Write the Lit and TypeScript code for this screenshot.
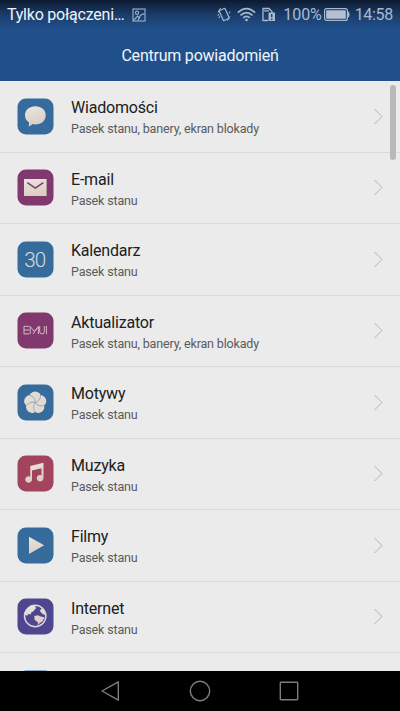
import { LitElement, html, css, svg } from "lit";
import { customElement } from "lit/decorators.js";

const petals = [0, 72, 144, 216, 288];

const glyphs: Record<string, unknown> = {
  messages: svg`<path fill="url(#cream)" d="M18.3 8.2C24.3 8.2 28.7 11.900 28.700 17.200C28.700 22.700 24.300 26.400 18.500 26.400C17.500 26.400 16.600 26.300 15.700 26.100C14.500 27.300 13 28.100 11.400 28.500C12 27.400 12.200 26 12 24.400C9.500 22.800 8 20.300 8 17.200C8 11.900 12.400 8.200 18.300 8.200Z"/>`,
  mail: svg`<rect x="7" y="10" width="22.600" height="17" fill="url(#cream)"/><path d="M10.300 13.700L18.300 19.200L26.300 13.700" fill="none" stroke="#80386f" stroke-width="1.500"/>`,
  calendar: svg`<text x="18.200" y="25.600" text-anchor="middle" font-size="20.600" font-weight="300" textLength="21.800" fill="#dbdcda">30</text>`,
  emui: svg`<g fill="none" stroke="#dcc0ca" stroke-width=".95"><path d="M12.300 14.300H7V21.900H12.300M7 18H12.300M13.200 22V14.500L17.300 19.600L21.400 14.500V22M16 22L20 16M22.700 14V19.500Q22.700 22 25 22Q27.300 22 27.300 19.500V14M29.400 14V22.200"/></g>`,
  themes: svg`${petals.map((a) => svg`<circle transform="rotate(${a} 18.200 18.700)" cx="18.200" cy="13.400" r="6" fill="#e3dbd3"/>`)}
    ${petals.map((a) => svg`<path transform="rotate(${a + 36} 18.200 18.700)" d="M18.200 18.700C20.200 16.500 20.400 12.800 18.200 9.300" fill="none" stroke="#7f99ad" stroke-width=".7"/>`)}`,
  music: svg`<path fill="url(#cream)" d="M13.300 10.900L26.500 7.800V23.100A3.400 3.200 0 1 1 24.500 20.300V13.200L15 15.500V24.700A3.400 3.200 0 1 1 13.300 21.800Z"/>`,
  video: svg`<path fill="url(#cream)" d="M12 9.800L27.200 18.200L12 27Z"/>`,
  globe: svg`<circle cx="18.200" cy="18" r="10.700" fill="none" stroke="#dcd4da" stroke-width="1.500"/><path fill="url(#cream)" d="M10 10.900L14.500 7.800L19.500 7.500L17.700 8.900L19.500 9.700L17.500 11.700L16.800 13.100L14.200 14.600L13.900 16.600L12.200 15.900L10.500 16.700L10.400 17.900L8.200 16.700L7.600 14.900ZM17.300 18L21 17.300L23 18.300L27.600 19.400L25.300 23.400L22.800 25.100L20.800 27.500L21 24.600L17.600 21.700ZM22.800 12.600L25.200 10.300L27.800 13.500L28.400 17L26 16.300L24 14.500Z"/>`,
  none: svg``,
};

const rows = [
  ["Wiadomości", "Pasek stanu, banery, ekran blokady", "blue", "messages"],
  ["E-mail", "Pasek stanu", "purple", "mail"],
  ["Kalendarz", "Pasek stanu", "blue", "calendar"],
  ["Aktualizator", "Pasek stanu, banery, ekran blokady", "purple", "emui"],
  ["Motywy", "Pasek stanu", "blue", "themes"],
  ["Muzyka", "Pasek stanu", "red", "music"],
  ["Filmy", "Pasek stanu", "blue", "video"],
  ["Internet", "Pasek stanu", "indigo", "globe"],
  ["", "", "blue", "none"],
];

@customElement("app-root")
export class AppRoot extends LitElement {
  static styles = css`
    :host {
      display: flex;
      flex-direction: column;
      width: 400px;
      height: 711px;
      overflow: hidden;
      background: #ebebeb;
      font-family: Roboto, sans-serif;
    }
    header {
      flex: none;
      height: 81px;
      color: #f2f5f9;
      background: linear-gradient(#0c1a30 0, #10233f 4px, #1b3f6e 16px, #20508c 30px);
    }
    .status {
      display: flex;
      align-items: center;
      height: 29px;
      padding: 0 7px;
      font-size: 16px;
      color: #a9b9d0;
    }
    .carrier { width: 118px; color: #f0f3f7; white-space: nowrap; letter-spacing: -.22px; }
    .picture { margin-left: 7px; }
    .system { display: flex; align-items: center; margin-left: auto; }
    .wifi { margin-left: 6px; }
    .sim { margin-left: 6px; }
    .percent { margin-left: 7px; letter-spacing: -.1px; }
    .battery { margin-left: 2px; }
    .time { margin-left: 5px; letter-spacing: -.3px; }
    h1 {
      margin: 0;
      font-size: 16px;
      font-weight: 400;
      line-height: 54px;
      letter-spacing: -.22px;
      text-align: center;
    }
    main { position: relative; flex: 1; min-height: 0; overflow: hidden; }
    .row {
      display: flex;
      align-items: center;
      box-sizing: border-box;
      height: 71.500px;
      padding: 0 16px 0 17px;
      border-bottom: 1px solid #dadada;
    }
    .tile { flex: none; width: 37px; height: 37px; }
    .blue { fill: #366c9c; }
    .purple { fill: #80386f; }
    .red { fill: #a2445e; }
    .indigo { fill: #4e468e; }
    .text { flex: 1; margin-left: 17px; padding-top: 4px; }
    .title { font-size: 16px; line-height: 21px; letter-spacing: -.2px; color: #202020; }
    .detail { font-size: 12.500px; line-height: 21px; letter-spacing: -.16px; color: #5a5a5a; }
    .thumb {
      position: absolute;
      top: 4px;
      right: 4px;
      width: 6px;
      height: 75px;
      border-radius: 3px;
      background: #b9b9b9;
    }
    nav {
      display: flex;
      flex: none;
      align-items: center;
      justify-content: center;
      gap: 65px;
      height: 40px;
      background: #000;
    }
    svg { display: block; }
  `;

  render() {
    return html`
      <header>
        <div class="status">
          <span class="carrier">Tylko połączeni…</span>
          <svg class="picture" width="14" height="14" fill="none" stroke="#97a9c3" stroke-width="1.200"><rect x="1" y="1" width="12" height="12"/><circle cx="5" cy="4.800" r="1.600"/><path d="M1.500 12.500L5.500 8L8 10.500M6 12.500Q8 5.500 12.500 6"/></svg>
          <div class="system">
            <svg width="14" height="15" fill="none" stroke="#a9b9d0" stroke-width="1.200"><rect x="4" y="2" width="6.400" height="11" rx=".8" transform="rotate(-24 7.200 7.500)"/><path stroke-width="1" d="M1 5.500L3.500 1M.8 9L2 7M10.500 13.500L13 9.500M12 6.500L13 4.500M1.800 11L3 9"/></svg>
            <svg class="wifi" width="19" height="15" fill="none" stroke="#a9b9d0" stroke-width="1.600"><path d="M.8 5.700Q9.500-2.500 18.200 5.700M3.500 8.400Q9.500 2.800 15.500 8.400M6.200 10.900Q9.500 7.900 12.800 10.900"/><circle cx="9.500" cy="13" r="1.300" fill="#a9b9d0" stroke="none"/></svg>
            <svg class="sim" width="14" height="15" fill="none" stroke="#a9b9d0"><path stroke-width="1.300" d="M6 13.500H1V1.500H7L10 4.500V6M2 3.800H7"/><path stroke="none" fill="#a9b9d0" d="M6.500 5.500H13V14H6.500Z"/><path stroke="#1d4678" stroke-width="1.400" d="M9.700 7V10.300M9.700 11.500V13"/></svg>
            <span class="percent">100%</span>
            <svg class="battery" width="26" height="13"><rect x=".6" y=".6" width="22.800" height="11.800" rx="2" fill="none" stroke="#a9b9d0" stroke-width="1.200"/><rect x="2.200" y="2.200" width="19.600" height="8.600" rx=".5" fill="#b2c1d5"/><path d="M24 3.500Q25.500 3.500 25.500 6.500Q25.500 9.500 24 9.500Z" fill="#a9b9d0"/></svg>
            <span class="time">14:58</span>
          </div>
        </div>
        <h1>Centrum powiadomień</h1>
      </header>
      <main>
        ${rows.map(
          ([title, detail, color, glyph]) => html`
            <div class="row">
              <svg class="tile" viewBox="0 0 37 37">
                <defs><linearGradient id="cream" x1="0" y1="0" x2=".3" y2="1"><stop stop-color="#e8e7e3"/><stop offset="1" stop-color="#dccdc2"/></linearGradient></defs>
                <rect class=${color} x=".5" y=".5" width="36" height="36" rx="8.500"/>
                ${glyphs[glyph]}
              </svg>
              <div class="text"><div class="title">${title}</div><div class="detail">${detail}</div></div>
              <svg width="11" height="17" fill="none" stroke="#b4b4b4" stroke-width="1"><path d="M1.500 1L9 8.500L1.500 16"/></svg>
            </div>
          `
        )}
        <div class="thumb"></div>
      </main>
      <nav>
        <svg width="24" height="24" fill="none" stroke="#7d7d7d" stroke-width="1.400"><path stroke-linejoin="round" d="M19.300 2.800V21.200L3 12Z"/></svg>
        <svg width="24" height="24" fill="none" stroke="#7d7d7d" stroke-width="1.400"><circle cx="12" cy="12" r="9.700"/></svg>
        <svg width="24" height="24" fill="none" stroke="#7d7d7d" stroke-width="1.400"><rect x="3.300" y="3.300" width="17.400" height="17.400" rx=".6"/></svg>
      </nav>
    `;
  }
}
